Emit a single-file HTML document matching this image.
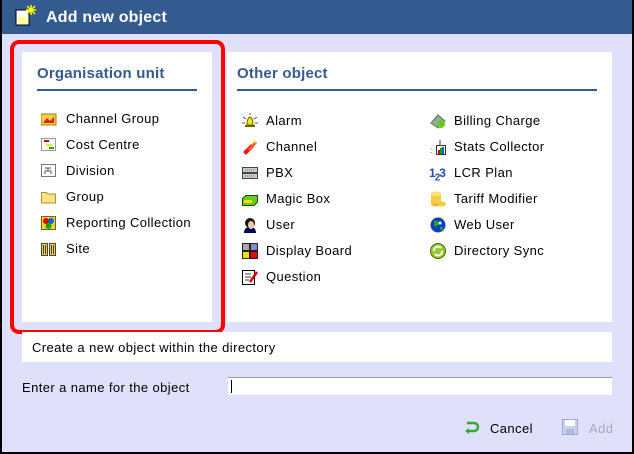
<!DOCTYPE html>
<html><head><meta charset="utf-8"><style>
*{margin:0;padding:0;box-sizing:border-box}
body{width:634px;height:454px;overflow:hidden;background:#000;font-family:"Liberation Sans","DejaVu Sans",sans-serif;font-size:13px;color:#000;position:relative}
#win{position:absolute;left:2px;top:0;width:630px;height:452px;background:#e0e0fa}
#title{position:absolute;left:0;top:0;width:630px;height:34px;background:#335b8f;color:#fff;font-weight:bold;font-size:16px}
.a{position:absolute}
.panel{position:absolute;background:#fff}
h2{position:absolute;font-size:15px;font-weight:bold;color:#335b8f;letter-spacing:0.2px}
.line{position:absolute;height:2px;background:#335b8f}
.it{position:absolute;white-space:nowrap;line-height:16px;letter-spacing:0.4px}
.ic{position:absolute;width:16px;height:16px}
</style></head><body>
<div id="win">
<div id="title">
<svg class="a" style="left:13px;top:5px" width="22" height="22"><rect x="1" y="5" width="13" height="15" fill="#fff" stroke="#000"/><rect x="3" y="12" width="10" height="7" fill="#ffffa0"/><g stroke="#ff0" stroke-width="1.5"><line x1="16" y1="0" x2="16" y2="10"/><line x1="11" y1="5" x2="21" y2="5"/><line x1="12" y1="1" x2="20" y2="9"/><line x1="20" y1="1" x2="12" y2="9"/></g></svg>
<div class="a" style="left:44px;top:9px;letter-spacing:0.2px">Add new object</div>
</div>
<div class="panel" style="left:20px;top:52px;width:190px;height:270px"></div>
<div class="panel" style="left:225px;top:52px;width:385px;height:270px"></div>
<div class="a" style="left:8px;top:40px;width:215px;height:294px;border:4px solid #f00;border-radius:9px"></div>
<h2 style="left:35px;top:65px">Organisation unit</h2>
<div class="line" style="left:35px;top:89px;width:160px"></div>
<h2 style="left:235px;top:65px">Other object</h2>
<div class="line" style="left:235px;top:89px;width:360px"></div>

<svg class="ic" style="left:39px;top:111px"><rect x="0" y="3" width="15" height="11" fill="#f4d040" stroke="#a08000"/><path d="M2 12 L6 7 L9 10 L13 6 L13 12Z" fill="#e02020"/></svg><div class="it" style="left:64px;top:111px">Channel Group</div>
<svg class="ic" style="left:39px;top:137px"><rect x="0.5" y="1.5" width="14" height="12" fill="#fff" stroke="#999"/><rect x="3" y="3" width="5" height="2" fill="#c00"/><rect x="5" y="7" width="6" height="2" fill="#ee0"/><rect x="8" y="10" width="5" height="2" fill="#0a0"/></svg><div class="it" style="left:64px;top:137px">Cost Centre</div>
<svg class="ic" style="left:39px;top:163px"><rect x="0.5" y="1.5" width="14" height="12" fill="#fff" stroke="#777"/><path d="M4 5h6M7 5v3M4 8h6M4 8v3M10 8v3" stroke="#555" fill="none"/></svg><div class="it" style="left:64px;top:163px">Division</div>
<svg class="ic" style="left:39px;top:189px"><path d="M0.5 3.5h5l1 1.5h8v9h-14z" fill="#fbe38a" stroke="#b09020"/></svg><div class="it" style="left:64px;top:189px">Group</div>
<svg class="ic" style="left:39px;top:215px"><rect x="0.5" y="1.5" width="14" height="13" fill="#f4d040" stroke="#806000"/><circle cx="5" cy="6" r="3" fill="#d00"/><circle cx="10" cy="6" r="3" fill="#06c"/><circle cx="7.5" cy="11" r="3" fill="#0a0"/></svg><div class="it" style="left:64px;top:215px">Reporting Collection</div>
<svg class="ic" style="left:39px;top:241px"><rect x="0.5" y="2.5" width="6" height="12" fill="#f4d040" stroke="#444"/><rect x="8.5" y="2.5" width="6" height="12" fill="#f4d040" stroke="#444"/><path d="M2.5 4v9M4.5 4v9M10.5 4v9M12.5 4v9" stroke="#444"/></svg><div class="it" style="left:64px;top:241px">Site</div>

<svg class="ic" style="left:240px;top:113px"><path d="M5 12 Q5 5 8 4 Q11 5 11 12Z" fill="#ee0" stroke="#660"/><rect x="3" y="12" width="10" height="2" fill="#660"/><path d="M1 4l3 2M15 4l-3 2M8 0v2M0 10h3M13 10h3" stroke="#555"/></svg><div class="it" style="left:264px;top:113px">Alarm</div>
<svg class="ic" style="left:240px;top:139px"><path d="M1 13 L9 5 L12 8 L4 16Z" fill="#e02020"/><path d="M6 10 L13 2 L15 4 L8 12Z" fill="#f06020"/><path d="M12 2l2 2" stroke="#fd0" stroke-width="2"/></svg><div class="it" style="left:264px;top:139px">Channel</div>
<svg class="ic" style="left:240px;top:165px"><rect x="0.5" y="2.5" width="15" height="5" fill="#ccc" stroke="#444"/><rect x="0.5" y="8.5" width="15" height="5" fill="#ccc" stroke="#444"/><path d="M3 5h10M3 11h10" stroke="#666" stroke-dasharray="1 1"/></svg><div class="it" style="left:264px;top:165px">PBX</div>
<svg class="ic" style="left:240px;top:191px"><path d="M0.5 7.5 L4 4.5 H15.5 V11 L12 14.5 H0.5Z" fill="#6c2" stroke="#240"/><rect x="2" y="9" width="8" height="3" fill="#fd0"/></svg><div class="it" style="left:264px;top:191px">Magic Box</div>
<svg class="ic" style="left:240px;top:217px"><path d="M2 16 Q2 10 8 10 Q14 10 14 16Z" fill="#005"/><circle cx="8" cy="6" r="5" fill="#111"/><ellipse cx="9" cy="8" rx="3" ry="4" fill="#f2c8a0"/></svg><div class="it" style="left:264px;top:217px">User</div>
<svg class="ic" style="left:240px;top:243px"><rect x="0" y="0" width="16" height="16" fill="#222"/><rect x="1" y="1" width="6" height="6" fill="#aaa"/><rect x="9" y="1" width="6" height="6" fill="#88c"/><rect x="1" y="9" width="6" height="6" fill="#fd0"/><rect x="9" y="9" width="6" height="6" fill="#e00"/></svg><div class="it" style="left:264px;top:243px">Display Board</div>
<svg class="ic" style="left:240px;top:269px"><rect x="0.5" y="1.5" width="12" height="14" fill="#fff" stroke="#000"/><path d="M3 5h6M3 8h6M3 11h4" stroke="#444"/><path d="M8 13 L15 3" stroke="#d00" stroke-width="2.5"/></svg><div class="it" style="left:264px;top:269px">Question</div>

<svg class="ic" style="left:428px;top:113px"><path d="M1 10 L8 2 L15 8 L8 15Z" fill="#9a9" stroke="#575"/><circle cx="11" cy="11" r="4" fill="#6c2"/></svg><div class="it" style="left:452px;top:113px">Billing Charge</div>
<svg class="ic" style="left:428px;top:139px"><rect x="6.5" y="6.5" width="9" height="9" fill="#fff" stroke="#333"/><rect x="8" y="11" width="2" height="4" fill="#d00"/><rect x="10" y="9" width="2" height="6" fill="#0a0"/><rect x="12" y="8" width="2" height="7" fill="#06c"/><path d="M10 6V1" stroke="#333"/><text x="0" y="14" font-size="8" fill="#333">:</text></svg><div class="it" style="left:452px;top:139px">Stats Collector</div>
<div class="it" style="left:427px;top:165px;color:#2050c0;font-size:12px;font-weight:bold;letter-spacing:-1px">1<sub style="font-size:10px">2</sub>3</div><div class="it" style="left:452px;top:165px">LCR Plan</div>
<svg class="ic" style="left:428px;top:191px"><ellipse cx="6" cy="13" rx="5" ry="2.5" fill="#e8b830"/><rect x="1" y="3" width="10" height="10" fill="#f4cc40"/><ellipse cx="6" cy="3" rx="5" ry="2.5" fill="#fde070"/><ellipse cx="12" cy="13" rx="4" ry="2.5" fill="#f4cc40"/></svg><div class="it" style="left:452px;top:191px">Tariff Modifier</div>
<svg class="ic" style="left:428px;top:217px"><circle cx="8" cy="8" r="7.5" fill="#1040c0"/><path d="M4 4 Q8 3 9 7 Q7 10 4 9Z M10 10 Q13 9 13 12 Q11 14 10 12Z" fill="#2a2"/><circle cx="10" cy="6" r="1.5" fill="#fff"/></svg><div class="it" style="left:452px;top:217px">Web User</div>
<svg class="ic" style="left:428px;top:243px"><circle cx="8" cy="8" r="7.5" fill="#9c3" stroke="#460"/><path d="M4 8 A4 4 0 0 1 11 5 M12 8 A4 4 0 0 1 5 11" stroke="#fff" stroke-width="1.8" fill="none"/></svg><div class="it" style="left:452px;top:243px">Directory Sync</div>

<div class="panel" style="left:20px;top:332px;width:590px;height:30px"></div>
<div class="it" style="left:30px;top:340px">Create a new object within the directory</div>
<div class="it" style="left:20px;top:380px">Enter a name for the object</div>
<div class="a" style="left:226px;top:377px;width:384px;height:18px;background:#fff;border-top:1px solid #999"></div>
<div class="a" style="left:229px;top:380px;width:1px;height:13px;background:#000"></div>
<svg class="a" style="left:462px;top:419px" width="16" height="16"><path d="M3 4 H10 A4 4 0 0 1 10 12 H4" stroke="#3a3" stroke-width="2.5" fill="none"/><path d="M1 12 L5 9 L5 15Z" fill="#3a3"/></svg>
<div class="it" style="left:488px;top:421px">Cancel</div>
<svg class="a" style="left:560px;top:419px" width="16" height="16"><rect x="0.5" y="0.5" width="15" height="15" fill="#c8d0f0" stroke="#a0a8d8"/><rect x="3" y="1" width="10" height="6" fill="#fff"/><rect x="4" y="10" width="8" height="5" fill="#b0b8e0"/></svg>
<div class="it" style="left:587px;top:421px;color:#a8a8c0">Add</div>
</div>
</body></html>
